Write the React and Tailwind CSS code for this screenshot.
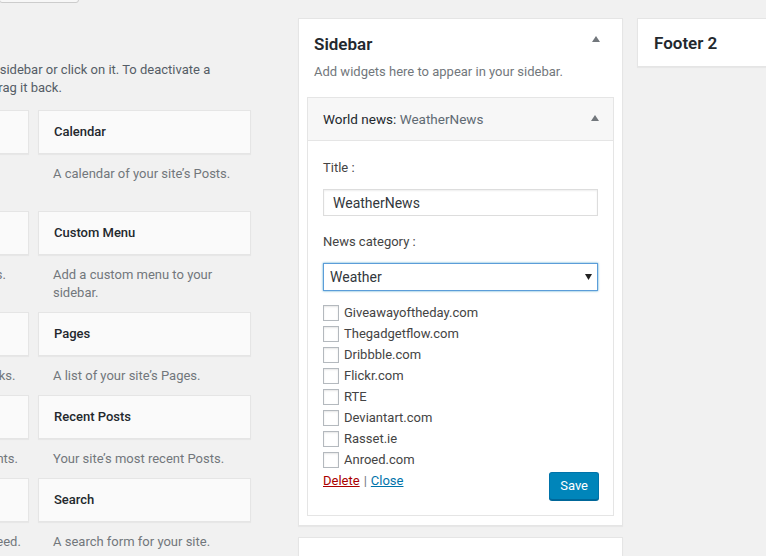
const widgets = [
  { title: "Archives", desc: "A monthly archive of your site’s Posts." },
  { title: "Calendar", desc: "A calendar of your site’s Posts." },
  { title: "Categories", desc: "A list or dropdown of categories." },
  { title: "Custom Menu", desc: "Add a custom menu to your sidebar." },
  { title: "Meta", desc: "Login, RSS, & WordPress.org links.", oneLine: true },
  { title: "Pages", desc: "A list of your site’s Pages." },
  { title: "Recent Comments", desc: "Your site’s most recent comments.", oneLine: true },
  { title: "Recent Posts", desc: "Your site’s most recent Posts." },
  { title: "RSS", desc: "Entries from any RSS or Atom feed." },
  { title: "Search", desc: "A search form for your site." },
];

const sources = [
  "Giveawayoftheday.com",
  "Thegadgetflow.com",
  "Dribbble.com",
  "Flickr.com",
  "RTE",
  "Deviantart.com",
  "Rasset.ie",
  "Anroed.com",
];

function ArrowUp({ className = "" }) {
  return (
    <svg width="8" height="6" viewBox="0 0 8 6" className={className}>
      <path d="M4 0 L8 6 L0 6 Z" fill="#72777c" />
    </svg>
  );
}

function AvailableWidgets() {
  return (
    <div className="ml-[-197px] w-[448px] shrink-0">
      {/* page header button, mostly scrolled away */}
      <div className="mt-[-30px] ml-[197px] h-[33px] w-[80px] -translate-x-[1px] border border-[#ccc] bg-[#f7f7f7] rounded-b-[3px]" />

      <p className="mt-[58px] pl-[13px] text-[13px] leading-[18px] text-[#555d66] whitespace-nowrap">
        To activate a widget drag it to a sidebar or click on it. To deactivate a
        <br />
        widget and delete its settings, drag it back.
      </p>

      <div className="mt-[13px] grid grid-cols-[226px_213px] gap-x-[9px]">
        {widgets.map((w) => (
          <div key={w.title} className="flex flex-col pb-[10px]">
            <div className="h-[44px] border border-[#e5e5e5] bg-[#fafafa] shadow-[0_1px_1px_rgba(0,0,0,0.04)] flex items-center px-[15px]">
              <h3 className="text-[13px] font-medium text-[#23282d]">{w.title}</h3>
            </div>
            <p
              className={
                w.oneLine
                  ? "mt-[11px] pl-[15px] text-[13px] leading-[18px] text-[#72777c] whitespace-nowrap"
                  : "mt-[11px] pl-[15px] pr-[4px] text-[13px] leading-[18px] text-[#72777c]"
              }
            >
              {w.desc}
            </p>
          </div>
        ))}
      </div>
    </div>
  );
}

function SidebarPanel() {
  return (
    <div className="w-[325px] shrink-0 mt-[18px] flex flex-col gap-[11px]">
      <div className="bg-white border border-[#e5e5e5] shadow-[0_1px_1px_rgba(0,0,0,0.04)] pb-[9px]">
        <div className="px-[15px] pt-[13px]">
          <div className="flex items-center justify-between">
            <h2 className="text-[17px] leading-[24px] font-semibold text-[#23282d]">Sidebar</h2>
            <ArrowUp className="mr-[7px] -mt-[10px]" />
          </div>
          <p className="mt-[7px] text-[13px] leading-[18px] text-[#72777c]">
            Add widgets here to appear in your sidebar.
          </p>
        </div>

        <div className="mt-[16px] mx-[8px] border border-[#e5e5e5] bg-white">
          <div className="h-[43px] bg-[#f7f7f7] border-b border-[#e5e5e5] flex items-center justify-between px-[15px]">
            <h3 className="text-[13.5px] text-[#23282d]">
              World news: <span className="text-[#606a73]">WeatherNews</span>
            </h3>
            <ArrowUp className="-mr-[1px] -mt-[2px]" />
          </div>

          <div className="px-[15px] pt-[18px] pb-[15px]">
            <label className="block text-[13px] leading-[18px] text-[#444]">Title :</label>
            <input
              type="text"
              readOnly
              value="WeatherNews"
              className="mt-[12px] block w-full h-[27px] border border-[#ddd] bg-white px-[9px] text-[14px] text-[#32373c] shadow-[inset_0_1px_2px_rgba(0,0,0,0.07)] outline-none"
            />

            <label className="mt-[17px] block text-[13px] leading-[18px] text-[#444]">News category :</label>
            <div className="relative mt-[12px]">
              <select
                value="weather"
                onChange={() => {}}
                className="appearance-none block w-full h-[28px] border border-[#5b9dd9] bg-white pl-[6px] text-[14px] text-[#32373c] shadow-[0_0_2px_rgba(30,140,190,0.8)] outline-none"
              >
                <option value="weather">Weather</option>
              </select>
              <svg width="7" height="6" viewBox="0 0 7 6" className="absolute right-[6px] top-[11px] pointer-events-none">
                <path d="M0 0 L7 0 L3.5 6 Z" fill="#222" />
              </svg>
            </div>

            <ul className="mt-[14px] flex flex-col gap-[5px]">
              {sources.map((s) => (
                <li key={s} className="flex items-center h-[16px]">
                  <input
                    type="checkbox"
                    className="appearance-none w-[16px] h-[16px] border border-[#b4b9be] bg-white shadow-[inset_0_1px_2px_rgba(0,0,0,0.1)] m-0"
                  />
                  <span className="ml-[5px] text-[13px] text-[#444]">{s}</span>
                </li>
              ))}
            </ul>

            <div className="mt-[4px] flex items-start justify-between">
              <div className="text-[13px] leading-[18px] text-[#72777c]">
                <a className="text-[#a00] underline">Delete</a>
                <span className="mx-[4px]">|</span>
                <a className="text-[#0073aa] underline">Close</a>
              </div>
              <button className="mr-[-1px] h-[28px] px-[10px] rounded-[3px] bg-[#0085ba] border border-[#0073aa] border-b-[#006799] text-white text-[13px] shadow-[0_1px_0_#006799]">
                Save
              </button>
            </div>
          </div>
        </div>
      </div>

      <div className="h-[60px] bg-white border border-[#e5e5e5] shadow-[0_1px_1px_rgba(0,0,0,0.04)]" />
    </div>
  );
}

function FooterPanel() {
  return (
    <div className="w-[325px] shrink-0 mt-[18px] h-[49px] bg-white border border-[#e5e5e5] shadow-[0_1px_1px_rgba(0,0,0,0.04)] flex items-center px-[16px] pt-[3px]">
      <h2 className="text-[17px] font-semibold text-[#23282d]">Footer 2</h2>
    </div>
  );
}

export default function App() {
  return (
    <div className="w-[766px] h-[556px] overflow-hidden bg-[#f1f1f1] font-['Roboto',sans-serif]">
      <div className="flex items-start">
        <AvailableWidgets />
        <div className="ml-[47px] flex items-start gap-[14px]">
          <SidebarPanel />
          <FooterPanel />
        </div>
      </div>
    </div>
  );
}
